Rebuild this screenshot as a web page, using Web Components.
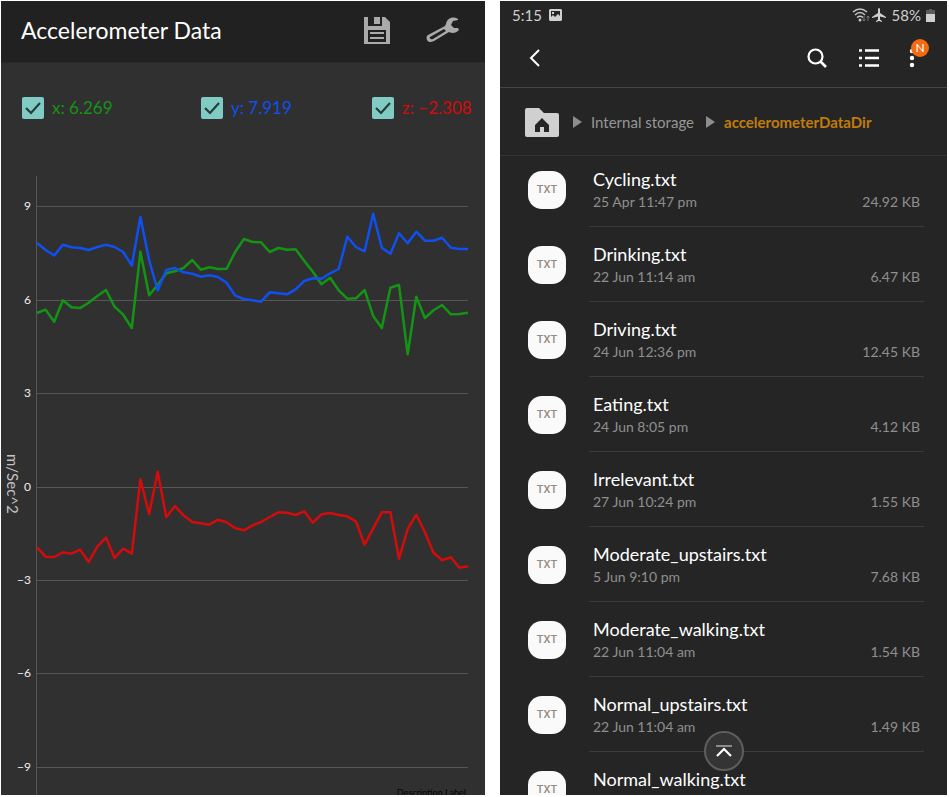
<!DOCTYPE html>
<html lang="en">
<head>
<meta charset="utf-8">
<title>Accelerometer Data</title>
<style>
  html, body { margin: 0; height: 100%; background: #fff; }
  body { font-family: Lato, "Open Sans", sans-serif; color: #fff; }
  two-screens { height: 100vh; }
</style>
</head>
<body>
<two-screens>
  <sensor-screen>
    <app-bar>Accelerometer Data</app-bar>
    <axis-toggles>
      <axis-toggle style="--tone:#149414">x: 6.269</axis-toggle>
      <axis-toggle style="--tone:#0f50ee">y: 7.919</axis-toggle>
      <axis-toggle style="--tone:#d40b0b">z: −2.308</axis-toggle>
    </axis-toggles>
    <sensor-chart></sensor-chart>
  </sensor-screen>
  <files-screen>
    <status-bar>5:15</status-bar>
    <files-toolbar></files-toolbar>
    <path-bar></path-bar>
    <file-list>
      <file-row when="25 Apr 11:47 pm" size="24.92 KB">Cycling.txt</file-row>
      <file-row when="22 Jun 11:14 am" size="6.47 KB">Drinking.txt</file-row>
      <file-row when="24 Jun 12:36 pm" size="12.45 KB">Driving.txt</file-row>
      <file-row when="24 Jun 8:05 pm" size="4.12 KB">Eating.txt</file-row>
      <file-row when="27 Jun 10:24 pm" size="1.55 KB">Irrelevant.txt</file-row>
      <file-row when="5 Jun 9:10 pm" size="7.68 KB">Moderate_upstairs.txt</file-row>
      <file-row when="22 Jun 11:04 am" size="1.54 KB">Moderate_walking.txt</file-row>
      <file-row when="22 Jun 11:04 am" size="1.49 KB">Normal_upstairs.txt</file-row>
      <file-row>Normal_walking.txt</file-row>
    </file-list>
    <top-button></top-button>
  </files-screen>
</two-screens>

<script>
const define = (name, html, setup) => {
  const template = document.createElement('template');
  template.innerHTML = html;
  customElements.define(name, class extends HTMLElement {
    constructor() {
      super();
      this.attachShadow({ mode: 'open' }).append(template.content.cloneNode(true));
    }
    connectedCallback() { if (setup) setup(this, this.shadowRoot); }
  });
};

define('two-screens', `
<style>
  :host { display: grid; grid-template-columns: 484fr 447fr; grid-template-rows: minmax(0, 1fr); gap: 15px; padding: 1px 2px 2px 1px; box-sizing: border-box; }
</style><slot></slot>`);

define('sensor-screen', `
<style>
  :host { display: flex; flex-direction: column; background: #303030; overflow: hidden; min-width: 0; }
</style><slot></slot>`);

define('app-bar', `
<style>
  :host { display: flex; align-items: center; height: 61px; flex: none; padding: 0 25px 0 20px; background: #212121; border-bottom: 1px solid #292929; }
  h1 { flex: 1; margin: 0; padding-bottom: 4px; font-size: 23px; line-height: 32px; font-weight: 400; }
  button { border: 0; padding: 0 0 4px; background: none; display: flex; }
  button + button { margin-left: 35px; }
</style>
<h1><slot></slot></h1>
<button aria-label="Save"><svg width="28" height="28" viewBox="0 0 28 28">
  <path fill="#aaa" fill-rule="evenodd" d="M1 1H5V10H19V1H22L27 6V28H1ZM5 14V26H23V14Z"/>
  <path fill="#aaa" d="M11 1H17V8H11ZM7 16H21V18H7ZM7 21H21V23H7Z"/>
</svg></button>
<button aria-label="Settings"><svg width="34" height="28" viewBox="0 0 34 28">
  <path fill="#aaa" fill-rule="evenodd" d="M32 3C27 0 21 2 20 8L19 10L2 19C-1 21 1 27 5 26L8 25L23 16C27 18 30 17 33 14L32 12H28L25 9L27 5L32 4ZM18 13L20 15L7 23C5 24 3 22 4 21Z"/>
</svg></button>`);

define('axis-toggles', `
<style>
  :host { display: grid; grid-template-columns: 179fr 171fr 113fr; align-items: center; height: 90px; flex: none; padding-left: 21px; }
</style><slot></slot>`);

define('axis-toggle', `
<style>
  :host { display: block; color: var(--tone); font-size: 17px; line-height: 24px; white-space: nowrap; }
  label { display: flex; align-items: center; gap: 8px; }
  span { display: grid; flex: none; }
  input, svg { grid-area: 1 / 1; }
  input { appearance: none; margin: 0; width: 22px; height: 22px; border-radius: 2px; background: #80cbc4; }
  svg { pointer-events: none; visibility: hidden; }
  input:checked + svg { visibility: visible; }
</style>
<label><span><input type="checkbox" checked><svg width="22" height="22" viewBox="0 0 22 22"><path d="M4 11L9 16L18 6" fill="none" stroke="#263c3a" stroke-width="2.2"/></svg></span><slot></slot></label>`);

define('sensor-chart', `
<style>
  :host { display: block; min-height: 0; margin-top: 23px; }
  svg { display: block; width: 100%; }
  text { fill: #eee; font-size: 12px; }
  .unit { fill: #c4c4c4; font-size: 15px; }
  .note { fill: #050505; font-size: 9px; }
  .grid { stroke: #565656; stroke-width: 1; }
  polyline { fill: none; stroke-width: 2.5; stroke-linejoin: round; }
</style>
<svg viewBox="1 176 484 619" role="img" aria-label="Acceleration over time">
  <g class="grid"></g><g class="ticks" text-anchor="end"></g><g class="lines"></g>
  <text class="unit" transform="translate(7 454) rotate(90)">m/Sec^2</text>
  <text class="note" x="466" y="796" text-anchor="end">Description Label</text>
</svg>`, (host, root) => {
  const series = {
    '#149414': [313,309.7,321.7,300.3,307.3,308,302.7,296,290,306.7,314.7,328,251.7,295.3,285,273.3,271.3,268,260,269.7,267.3,269,268.7,251.7,239,242,242.3,252,248,249.7,249.3,260.7,271.7,284.3,277.7,290.3,298.7,298.3,290,316,328,287.7,285,354.3,296.7,318,310.3,305,314.3,314,312.7],
    '#0f50ee': [243,250,255.5,244.7,247.3,248,250,247,244.7,247,252,265.5,217,260,290.5,270,268,272.3,273.7,276.7,275.3,277,282.7,295.7,299,300.3,301.7,292.3,293.3,294.3,289.3,281,278.3,278.7,273.3,269,236.7,247,251.3,213.7,247.7,253.7,233.3,243.3,231.7,240.7,240.7,237.7,247.7,249,249],
    '#d40b0b': [547.3,556.7,557,552.3,553.7,549.7,562,546.7,537.7,558,548.7,553.7,479.3,514,471.7,517.3,506,515.3,522,523.3,524.7,519.7,522.3,528.3,530.3,525.3,522,517,512.3,512.7,515,511.3,522.7,514.3,513,515,516.3,521.3,544.7,528.3,512.3,512.3,558.7,529,514.7,532.3,552.7,560.3,557.3,567.7,566.3]
  };
  const ticks = [['9', 206], ['6', 300], ['3', 393], ['0', 487], ['−3', 580], ['−6', 673], ['−9', 767]];
  root.querySelector('.grid').innerHTML = '<path d="M36.5 176V795"/>' +
    ticks.map(([, y]) => `<path d="M37 ${y + 0.5}H468"/>`).join('');
  root.querySelector('.ticks').innerHTML =
    ticks.map(([label, y]) => `<text x="31" y="${y + 4}">${label}</text>`).join('');
  root.querySelector('.lines').innerHTML = Object.entries(series).map(([tone, ys]) =>
    `<polyline stroke="${tone}" points="${ys.map((y, i) => `${(37 + i * 8.62).toFixed(1)},${y}`).join(' ')}"/>`).join('');
});

define('files-screen', `
<style>
  :host { display: flex; flex-direction: column; position: relative; background: #252525; overflow: hidden; min-width: 0; }
</style><slot></slot>`);

define('status-bar', `
<style>
  :host { display: flex; align-items: center; height: 28px; flex: none; padding: 0 12px; color: #d0d0d0; font-size: 15px; line-height: 20px; }
  .pic { margin-left: 7px; }
  .gap { flex: 1; }
  .plane { margin: 0 6px 0 2px; }
  .battery { margin-left: 5px; }
</style>
<slot></slot>
<svg class="pic" width="13" height="12" viewBox="0 0 13 12"><path fill="#d0d0d0" fill-rule="evenodd" d="M1 0H12L13 1V11L12 12H1L0 11V1ZM2 2V8L4 6L6 8L9 5L11 7V2ZM3 3H5V5H3Z"/></svg>
<span class="gap"></span>
<svg width="18" height="14" viewBox="0 0 18 14"><g fill="none" stroke="#c4c4c4" stroke-width="1.5"><path d="M1 4Q8 -2 15 4M3 7Q8 2 13 7M5 9.500Q8 7 11 9.500"/></g><circle cx="8" cy="12" r="1.500" fill="#c4c4c4"/><path d="M12 8V13M10.500 11.500L12 13L13.500 11.500M16 13V8M14.500 9.500L16 8L17.500 9.500" stroke="#777" fill="none"/></svg>
<svg class="plane" width="14" height="14" viewBox="0 0 14 14"><path fill="#d0d0d0" d="M6 1Q7 -1 8 1V5L14 9V10L8 8.500V11.500L10 13V14L7 13L4 14V13L6 11.500V8.500L0 10V9L6 5Z"/></svg>
<span>58%</span>
<svg class="battery" width="9" height="13" viewBox="0 0 9 13"><path fill="#5c5c5c" d="M3 0H6V1H9V6H0V1H3Z"/><path fill="#d0d0d0" d="M0 5H9V13H0Z"/></svg>`);

define('files-toolbar', `
<style>
  :host { display: flex; align-items: center; height: 58px; flex: none; border-bottom: 1px solid #454545; padding: 0 32px 0 28px; }
  button { border: 0; padding: 0; background: none; display: flex; position: relative; color: #fff; font-family: inherit; }
  svg { fill: none; stroke: #fff; }
  .back { margin-right: auto; }
  .list { margin: 0 29px 0 31px; }
  .badge { position: absolute; left: 2px; top: -9px; width: 18px; height: 18px; border-radius: 50%; background: #f26a12; font-size: 12px; line-height: 18px; text-align: center; }
</style>
<button class="back" aria-label="Back"><svg width="14" height="18" viewBox="0 0 14 18"><path d="M11 1L3 9L11 17" stroke-width="2"/></svg></button>
<button aria-label="Search"><svg width="20" height="20" viewBox="0 0 20 20"><circle cx="8.500" cy="8.500" r="7" stroke-width="2.200"/><path d="M13.500 13.500L19 19" stroke-width="2.600"/></svg></button>
<button class="list" aria-label="List view"><svg width="22" height="20" viewBox="0 0 22 20"><path d="M1 2.500H4M7 2.500H21M1 10H4M7 10H21M1 17.500H4M7 17.500H21" stroke-width="2.600"/></svg></button>
<button aria-label="More options"><svg width="6" height="20" viewBox="0 0 6 20"><g fill="#fff" stroke="none"><circle cx="3" cy="3" r="2.200"/><circle cx="3" cy="10" r="2.200"/><circle cx="3" cy="17" r="2.200"/></g></svg><span class="badge">N</span></button>`);

define('path-bar', `
<style>
  nav { display: flex; align-items: center; height: 68px; padding: 1px 25px 0; border-bottom: 1px solid #353535; box-sizing: border-box; font-size: 15px; line-height: 20px; white-space: nowrap; }
  :host { display: block; flex: none; }
  a { color: #979797; text-decoration: none; display: flex; }
  a[aria-current] { color: #c17c0a; font-weight: 700; }
  .arrow { margin: 0 9px 0 12px; }
  .home + .arrow { margin-left: 14px; }
</style>
<nav aria-label="Path">
  <a class="home" href="#home" aria-label="Home"><svg width="34" height="29" viewBox="0 0 34 29"><path fill="#d0d0d0" d="M2 0H14L19 5H32Q34 5 34 7V27Q34 29 32 29H2Q0 29 0 27V2Q0 0 2 0Z"/><path fill="#252525" d="M17 10L24 17V24H19V19H15V24H10V17Z"/></svg></a>
  <svg class="arrow" width="9" height="12" viewBox="0 0 9 12"><path fill="#8e8e8e" d="M0 0L9 6L0 12Z"/></svg>
  <a href="#internal">Internal storage</a>
  <svg class="arrow" width="9" height="12" viewBox="0 0 9 12"><path fill="#8e8e8e" d="M0 0L9 6L0 12Z"/></svg>
  <a href="#dir" aria-current="page">accelerometerDataDir</a>
</nav>`);

define('file-list', `
<style>
  :host { display: block; margin-top: -4px; min-height: 0; }
</style><slot></slot>`, host => host.setAttribute('role', 'list'));

define('file-row', `
<style>
  :host { display: block; }
  a { display: flex; align-items: center; height: 75px; padding: 0 23px 0 28px; color: inherit; text-decoration: none; }
  .icon { flex: none; width: 38px; height: 38px; margin-right: 23px; border-radius: 14px; background: #fafafa; color: #978b82; font-family: Roboto, sans-serif; font-weight: 500; font-size: 11px; line-height: 38px; text-align: center; }
  .body { flex: 1; min-width: 0; height: 75px; box-sizing: border-box; padding: 15px 4px 0; border-bottom: 1px solid #3b3b3b; }
  .name { font-size: 18px; line-height: 24px; }
  .meta { display: flex; justify-content: space-between; font-size: 14px; line-height: 21px; color: #8f8f8f; }
</style>
<a href="#file"><span class="icon">TXT</span><div class="body"><div class="name"><slot></slot></div><div class="meta"><span class="when"></span><span class="size"></span></div></div></a>`, (host, root) => {
  host.setAttribute('role', 'listitem');
  root.querySelector('.when').textContent = host.getAttribute('when') || '';
  root.querySelector('.size').textContent = host.getAttribute('size') || '';
});

define('top-button', `
<style>
  :host { position: absolute; bottom: 24px; left: 50%; transform: translateX(-50%); }
  button { display: grid; place-items: center; width: 40px; height: 40px; padding: 0; border-radius: 50%; border: 2px solid #5e5e5e; background: #343434; }
</style>
<button aria-label="Go to top"><svg width="16" height="13" viewBox="0 0 16 13" fill="none"><path d="M0 1H16" stroke="#aaa" stroke-width="1.500"/><path d="M1 11L8 4L15 11" stroke="#fff" stroke-width="2.200"/></svg></button>`);
</script>
</body>
</html>
